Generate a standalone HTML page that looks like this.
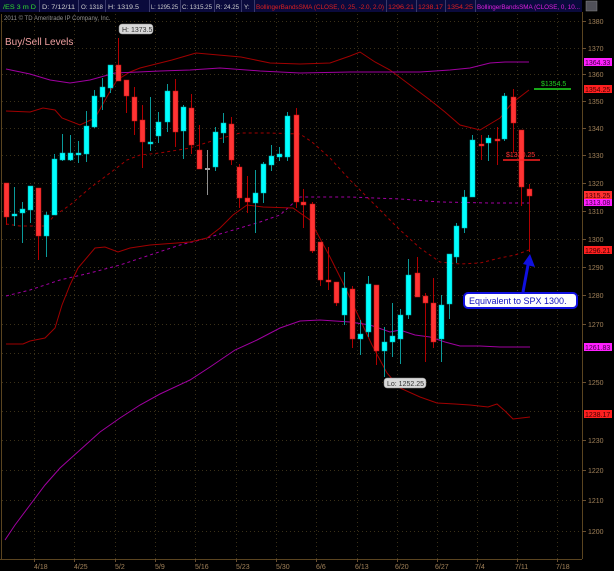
<!DOCTYPE html>
<html><head><meta charset="utf-8"><style>
html,body{margin:0;padding:0;background:#000;width:614px;height:571px;overflow:hidden}
svg{display:block}
text{font-family:"Liberation Sans",sans-serif}
</style></head><body>
<svg width="614" height="571" viewBox="0 0 614 571" xmlns="http://www.w3.org/2000/svg">
<rect width="614" height="571" fill="#000"/>
<!-- header -->
<rect x="0" y="0" width="582" height="12" fill="#0a0a3c"/>
<g stroke="#3a3a6a" stroke-width="1">
<line x1="39.5" y1="0" x2="39.5" y2="12"/><line x1="78.5" y1="0" x2="78.5" y2="12"/><line x1="105.5" y1="0" x2="105.5" y2="12"/><line x1="149.5" y1="0" x2="149.5" y2="12"/><line x1="180.5" y1="0" x2="180.5" y2="12"/><line x1="214.5" y1="0" x2="214.5" y2="12"/><line x1="241.5" y1="0" x2="241.5" y2="12"/><line x1="254.5" y1="0" x2="254.5" y2="12"/><line x1="386.5" y1="0" x2="386.5" y2="12"/><line x1="416.5" y1="0" x2="416.5" y2="12"/><line x1="445.5" y1="0" x2="445.5" y2="12"/><line x1="475.5" y1="0" x2="475.5" y2="12"/>
</g>
<g font-size="6.3" fill="#d0d0d0" lengthAdjust="spacingAndGlyphs">
<text x="3" y="9" fill="#30e030" textLength="33" lengthAdjust="spacingAndGlyphs">/ES 3 m D</text>
<text x="42" y="9" textLength="33" lengthAdjust="spacingAndGlyphs">D: 7/12/11</text>
<text x="81" y="9" textLength="22" lengthAdjust="spacingAndGlyphs">O: 1318</text>
<text x="108" y="9" textLength="31" lengthAdjust="spacingAndGlyphs">H: 1319.5</text>
<text x="151" y="9" textLength="27" lengthAdjust="spacingAndGlyphs">L: 1295.25</text>
<text x="182" y="9" textLength="30" lengthAdjust="spacingAndGlyphs">C: 1315.25</text>
<text x="216" y="9" textLength="23" lengthAdjust="spacingAndGlyphs">R: 24.25</text>
<text x="244" y="9">Y:</text>
<text x="256" y="9" fill="#e02020" textLength="128" lengthAdjust="spacingAndGlyphs">BollingerBandsSMA (CLOSE, 0, 25, -2.0, 2.0)</text>
<text x="388" y="9" fill="#e02020" textLength="26" lengthAdjust="spacingAndGlyphs">1296.21</text>
<text x="418" y="9" fill="#e02020" textLength="25" lengthAdjust="spacingAndGlyphs">1238.17</text>
<text x="447" y="9" fill="#e02020" textLength="26" lengthAdjust="spacingAndGlyphs">1354.25</text>
<text x="477" y="9" fill="#e020e0" textLength="103" lengthAdjust="spacingAndGlyphs">BollingerBandsSMA (CLOSE, 0, 10...</text>
</g>
<rect x="586" y="1" width="11" height="10" fill="#505058" stroke="#888" stroke-width="0.5"/>
<text x="4" y="20" font-size="6" fill="#909090">2011 © TD Ameritrade IP Company, Inc.</text>
<text x="5" y="45" font-size="10" fill="#f0a0a0">Buy/Sell Levels</text>
<!-- frame -->
<g stroke="#5a4420" stroke-width="1" fill="none">
<line x1="582.5" y1="12" x2="582.5" y2="559"/>
<line x1="0" y1="559.5" x2="582" y2="559.5"/>
<line x1="1.5" y1="14" x2="1.5" y2="559"/>
</g>
<!-- grid -->
<g stroke="#3a3018" stroke-width="1" stroke-dasharray="1,3">
<line x1="2" y1="21.5" x2="582" y2="21.5"/><line x1="2" y1="48.5" x2="582" y2="48.5"/><line x1="2" y1="74.5" x2="582" y2="74.5"/><line x1="2" y1="101.5" x2="582" y2="101.5"/><line x1="2" y1="128.5" x2="582" y2="128.5"/><line x1="2" y1="155.5" x2="582" y2="155.5"/><line x1="2" y1="183.5" x2="582" y2="183.5"/><line x1="2" y1="211.5" x2="582" y2="211.5"/><line x1="2" y1="239.5" x2="582" y2="239.5"/><line x1="2" y1="267.5" x2="582" y2="267.5"/><line x1="2" y1="295.5" x2="582" y2="295.5"/><line x1="2" y1="324.5" x2="582" y2="324.5"/><line x1="2" y1="353.5" x2="582" y2="353.5"/><line x1="2" y1="382.5" x2="582" y2="382.5"/><line x1="2" y1="411.5" x2="582" y2="411.5"/><line x1="2" y1="440.5" x2="582" y2="440.5"/><line x1="2" y1="470.5" x2="582" y2="470.5"/><line x1="2" y1="500.5" x2="582" y2="500.5"/><line x1="2" y1="531.5" x2="582" y2="531.5"/>
<line x1="34.5" y1="14" x2="34.5" y2="559"/><line x1="74.5" y1="14" x2="74.5" y2="559"/><line x1="115.5" y1="14" x2="115.5" y2="559"/><line x1="155.5" y1="14" x2="155.5" y2="559"/><line x1="195.5" y1="14" x2="195.5" y2="559"/><line x1="236.5" y1="14" x2="236.5" y2="559"/><line x1="276.5" y1="14" x2="276.5" y2="559"/><line x1="316.5" y1="14" x2="316.5" y2="559"/><line x1="357.5" y1="14" x2="357.5" y2="559"/><line x1="397.5" y1="14" x2="397.5" y2="559"/><line x1="437.5" y1="14" x2="437.5" y2="559"/><line x1="477.5" y1="14" x2="477.5" y2="559"/><line x1="517.5" y1="14" x2="517.5" y2="559"/><line x1="557.5" y1="14" x2="557.5" y2="559"/>
</g>
<!-- axis ticks + labels -->
<g stroke="#6a5030"><line x1="582" y1="21.5" x2="586" y2="21.5"/><line x1="582" y1="48.5" x2="586" y2="48.5"/><line x1="582" y1="74.5" x2="586" y2="74.5"/><line x1="582" y1="101.5" x2="586" y2="101.5"/><line x1="582" y1="128.5" x2="586" y2="128.5"/><line x1="582" y1="155.5" x2="586" y2="155.5"/><line x1="582" y1="183.5" x2="586" y2="183.5"/><line x1="582" y1="211.5" x2="586" y2="211.5"/><line x1="582" y1="239.5" x2="586" y2="239.5"/><line x1="582" y1="267.5" x2="586" y2="267.5"/><line x1="582" y1="295.5" x2="586" y2="295.5"/><line x1="582" y1="324.5" x2="586" y2="324.5"/><line x1="582" y1="382.5" x2="586" y2="382.5"/><line x1="582" y1="440.5" x2="586" y2="440.5"/><line x1="582" y1="470.5" x2="586" y2="470.5"/><line x1="582" y1="500.5" x2="586" y2="500.5"/><line x1="582" y1="531.5" x2="586" y2="531.5"/></g>
<g font-size="7" fill="#a08058">
<text x="588" y="24">1380</text><text x="588" y="51">1370</text><text x="588" y="77">1360</text><text x="588" y="104">1350</text><text x="588" y="131">1340</text><text x="588" y="158">1330</text><text x="588" y="186">1320</text><text x="588" y="214">1310</text><text x="588" y="242">1300</text><text x="588" y="270">1290</text><text x="588" y="298">1280</text><text x="588" y="327">1270</text><text x="588" y="385">1250</text><text x="588" y="443">1230</text><text x="588" y="473">1220</text><text x="588" y="503">1210</text><text x="588" y="534">1200</text>
</g>
<g font-size="7" fill="#a08058">
<text x="34" y="569">4/18</text><text x="74" y="569">4/25</text><text x="115" y="569">5/2</text><text x="155" y="569">5/9</text><text x="195" y="569">5/16</text><text x="236" y="569">5/23</text><text x="276" y="569">5/30</text><text x="316" y="569">6/6</text><text x="355" y="569">6/13</text><text x="395" y="569">6/20</text><text x="435" y="569">6/27</text><text x="475" y="569">7/4</text><text x="515" y="569">7/11</text><text x="556" y="569">7/18</text>
</g>
<g stroke="#6a5030"><line x1="34.5" y1="559" x2="34.5" y2="562"/><line x1="74.5" y1="559" x2="74.5" y2="562"/><line x1="115.5" y1="559" x2="115.5" y2="562"/><line x1="155.5" y1="559" x2="155.5" y2="562"/><line x1="195.5" y1="559" x2="195.5" y2="562"/><line x1="236.5" y1="559" x2="236.5" y2="562"/><line x1="276.5" y1="559" x2="276.5" y2="562"/><line x1="316.5" y1="559" x2="316.5" y2="562"/><line x1="357.5" y1="559" x2="357.5" y2="562"/><line x1="397.5" y1="559" x2="397.5" y2="562"/><line x1="437.5" y1="559" x2="437.5" y2="562"/><line x1="477.5" y1="559" x2="477.5" y2="562"/><line x1="517.5" y1="559" x2="517.5" y2="562"/><line x1="557.5" y1="559" x2="557.5" y2="562"/></g>

<!-- bands -->
<g fill="none" stroke-width="1">
<polyline stroke="#a00000" points="6,111 30,112 43,108 55,110 62,118 80,125 95,118 108,95 117,80 130,72 140,68 160,63 172,60 196,53 241,57 270,63 300,64 330,63 350,56 360,52 375,62 390,70 410,85 430,100 445,112 460,125 480,130 490,124 500,118 512,103 529,90"/>
<polyline stroke="#a000a0" points="6,69 30,74 50,80 70,83 90,80 115,73 160,71 190,70 220,68 260,71 300,73 350,72 420,72 450,70 470,68 490,63 505,62 529,62"/>
<polyline stroke="#a00000" stroke-dasharray="3,3" points="6,224 20,226 45,226 54,216 70,205 90,188 110,173 127,160 140,155 160,153 190,148 215,140 240,133 270,133 300,134 312,142 330,158 350,180 375,205 400,230 420,248 440,262 460,264 480,263 500,258 515,255 529,250"/>
<polyline stroke="#a000a0" stroke-dasharray="3,3" points="6,296 30,290 60,280 90,273 120,265 150,255 180,245 200,240 230,231 260,222 280,215 300,197 330,197 350,197 400,199 440,202 490,203 529,203"/>
<polyline stroke="#a00000" points="6,344 23,344 30,341 45,338 55,328 62,305 70,285 78,268 95,248 105,247 118,252 130,248 150,245 190,242 207,238 220,228 233,215 247,205 263,207 293,208 310,220 330,257 345,287 357,313 372,345 387,373 400,388 420,397 437,403 455,404 470,405 488,407 497,404 505,411 513,419 530,417"/>
<polyline stroke="#a000a0" points="5,540 15,525 30,505 45,485 60,468 80,450 100,432 120,418 140,405 160,394 190,380 210,367 235,350 257,340 280,328 300,321 320,320 350,322 370,325 390,332 400,330 415,335 430,337 445,342 460,346 480,346 500,347 530,347"/>
</g>

<!-- candles -->
<g id="c">
<g stroke="#b00000" stroke-width="1">
<line x1="6.5" y1="183" x2="6.5" y2="225"/><line x1="38.5" y1="188" x2="38.5" y2="260"/><line x1="118.5" y1="38" x2="118.5" y2="81"/><line x1="126.5" y1="80" x2="126.5" y2="113"/><line x1="134.5" y1="87" x2="134.5" y2="135"/><line x1="142.5" y1="105" x2="142.5" y2="168"/><line x1="175.5" y1="79" x2="175.5" y2="147"/><line x1="191.5" y1="94" x2="191.5" y2="154"/><line x1="199.5" y1="125" x2="199.5" y2="169"/><line x1="231.5" y1="117" x2="231.5" y2="165"/><line x1="239.5" y1="164" x2="239.5" y2="208"/><line x1="247.5" y1="176" x2="247.5" y2="213"/><line x1="296.5" y1="108" x2="296.5" y2="208"/><line x1="303.5" y1="189" x2="303.5" y2="228"/><line x1="312.5" y1="202" x2="312.5" y2="253"/><line x1="320.5" y1="242" x2="320.5" y2="286"/><line x1="328.5" y1="247" x2="328.5" y2="290"/><line x1="336.5" y1="282" x2="336.5" y2="306"/><line x1="352.5" y1="286" x2="352.5" y2="348"/><line x1="376.5" y1="285" x2="376.5" y2="365"/><line x1="417.5" y1="257" x2="417.5" y2="297"/><line x1="425.5" y1="293" x2="425.5" y2="362"/><line x1="433.5" y1="278" x2="433.5" y2="348"/><line x1="481.5" y1="135" x2="481.5" y2="160"/><line x1="497.5" y1="127" x2="497.5" y2="165"/><line x1="513.5" y1="89" x2="513.5" y2="153"/><line x1="521.5" y1="130" x2="521.5" y2="206"/><line x1="529.5" y1="184" x2="529.5" y2="252"/>
</g>
<g fill="#ff3434" stroke="#c01010" stroke-width="0.5">
<rect x="4" y="183" width="5" height="34"/><rect x="36" y="188" width="5" height="48"/><rect x="116" y="65" width="5" height="16"/><rect x="124" y="80" width="5" height="16"/><rect x="132" y="97" width="5" height="24"/><rect x="140" y="120" width="5" height="22"/><rect x="173" y="91" width="5" height="41"/><rect x="189" y="108" width="5" height="37"/><rect x="197" y="150" width="5" height="19"/><rect x="229" y="124" width="5" height="36"/><rect x="237" y="167" width="5" height="31"/><rect x="245" y="198" width="5" height="4"/><rect x="294" y="115" width="5" height="87"/><rect x="301" y="202" width="5" height="3"/><rect x="310" y="204" width="5" height="47"/><rect x="318" y="242" width="5" height="38"/><rect x="326" y="280" width="5" height="2"/><rect x="334" y="282" width="5" height="21"/><rect x="350" y="289" width="5" height="50"/><rect x="374" y="285" width="5" height="66"/><rect x="415" y="273" width="5" height="24"/><rect x="423" y="296" width="5" height="7"/><rect x="431" y="303" width="5" height="39"/><rect x="479" y="144" width="5" height="2"/><rect x="495" y="139" width="5" height="2"/><rect x="511" y="97" width="5" height="26"/><rect x="519" y="130" width="5" height="57"/><rect x="527" y="189" width="5" height="7"/>
</g>
<g stroke="#0a9a9a" stroke-width="1">
<line x1="14.5" y1="187" x2="14.5" y2="226"/><line x1="22.5" y1="202" x2="22.5" y2="243"/><line x1="30.5" y1="186" x2="30.5" y2="223"/><line x1="46.5" y1="212" x2="46.5" y2="257"/><line x1="54.5" y1="154" x2="54.5" y2="215"/><line x1="62.5" y1="134" x2="62.5" y2="161"/><line x1="70.5" y1="135" x2="70.5" y2="161"/><line x1="78.5" y1="141" x2="78.5" y2="163"/><line x1="86.5" y1="111" x2="86.5" y2="162"/><line x1="94.5" y1="90" x2="94.5" y2="128"/><line x1="102.5" y1="78" x2="102.5" y2="110"/><line x1="110.5" y1="65" x2="110.5" y2="93"/><line x1="150.5" y1="97" x2="150.5" y2="151"/><line x1="158.5" y1="112" x2="158.5" y2="143"/><line x1="167.5" y1="84" x2="167.5" y2="132"/><line x1="183.5" y1="105" x2="183.5" y2="159"/><line x1="215.5" y1="127" x2="215.5" y2="171"/><line x1="223.5" y1="113" x2="223.5" y2="143"/><line x1="255.5" y1="170" x2="255.5" y2="233"/><line x1="263.5" y1="162" x2="263.5" y2="203"/><line x1="271.5" y1="145" x2="271.5" y2="171"/><line x1="279.5" y1="147" x2="279.5" y2="161"/><line x1="287.5" y1="112" x2="287.5" y2="161"/><line x1="344.5" y1="272" x2="344.5" y2="325"/><line x1="360.5" y1="320" x2="360.5" y2="355"/><line x1="368.5" y1="276" x2="368.5" y2="337"/><line x1="384.5" y1="327" x2="384.5" y2="377"/><line x1="392.5" y1="303" x2="392.5" y2="357"/><line x1="400.5" y1="309" x2="400.5" y2="364"/><line x1="408.5" y1="259" x2="408.5" y2="319"/><line x1="441.5" y1="295" x2="441.5" y2="362"/><line x1="449.5" y1="254" x2="449.5" y2="319"/><line x1="456.5" y1="223" x2="456.5" y2="263"/><line x1="464.5" y1="190" x2="464.5" y2="233"/><line x1="472.5" y1="135" x2="472.5" y2="197"/><line x1="488.5" y1="135" x2="488.5" y2="161"/><line x1="504.5" y1="93" x2="504.5" y2="141"/>
</g>
<g fill="#00ffff" stroke="#00b0b0" stroke-width="0.5">
<rect x="12" y="214" width="5" height="2"/><rect x="20" y="209" width="5" height="4"/><rect x="28" y="186" width="5" height="24"/><rect x="44" y="215" width="5" height="21"/><rect x="52" y="159" width="5" height="56"/><rect x="60" y="153" width="5" height="7"/><rect x="68" y="153" width="5" height="7"/><rect x="76" y="153" width="5" height="2"/><rect x="84" y="126" width="5" height="28"/><rect x="92" y="96" width="5" height="31"/><rect x="100" y="87" width="5" height="10"/><rect x="108" y="65" width="5" height="23"/><rect x="148" y="142" width="5" height="2"/><rect x="156" y="122" width="5" height="14"/><rect x="165" y="91" width="5" height="31"/><rect x="181" y="107" width="5" height="24"/><rect x="213" y="132" width="5" height="35"/><rect x="221" y="123" width="5" height="10"/><rect x="253" y="193" width="5" height="10"/><rect x="261" y="164" width="5" height="29"/><rect x="269" y="156" width="5" height="9"/><rect x="277" y="154" width="5" height="3"/><rect x="285" y="116" width="5" height="41"/><rect x="342" y="288" width="5" height="27"/><rect x="358" y="334" width="5" height="5"/><rect x="366" y="284" width="5" height="48"/><rect x="382" y="342" width="5" height="9"/><rect x="390" y="336" width="5" height="6"/><rect x="398" y="315" width="5" height="24"/><rect x="406" y="275" width="5" height="40"/><rect x="439" y="305" width="5" height="34"/><rect x="447" y="254" width="5" height="50"/><rect x="454" y="226" width="5" height="31"/><rect x="462" y="197" width="5" height="31"/><rect x="470" y="140" width="5" height="57"/><rect x="486" y="138" width="5" height="5"/><rect x="502" y="96" width="5" height="43"/>
</g>
<line x1="207.5" y1="150" x2="207.5" y2="195" stroke="#909090"/>
<rect x="205" y="168" width="5" height="2" fill="#a0a0a0"/>
</g>

<!-- high / low markers -->
<rect x="119" y="24" width="34" height="10" rx="3" fill="#d8d8d8" stroke="#888" stroke-width="0.5"/>
<text x="122" y="32" font-size="7" fill="#333">H: 1373.5</text>
<rect x="384" y="378" width="42" height="10" rx="3" fill="#d8d8d8" stroke="#888" stroke-width="0.5"/>
<text x="387" y="386" font-size="7" fill="#333">Lo: 1252.25</text>

<!-- levels -->
<line x1="534" y1="89" x2="571" y2="89" stroke="#20e020" stroke-width="1.5"/>
<text x="541" y="86" font-size="7" fill="#20d020">$1354.5</text>
<line x1="503" y1="160" x2="540" y2="160" stroke="#ff2020" stroke-width="1.5"/>
<text x="506" y="157" font-size="7" fill="#ff3030">$1330.25</text>

<!-- callout -->
<path d="M523 292 L528 265" stroke="#1010e0" stroke-width="3" fill="none"/>
<path d="M523 264 L530 254 L535 267 Z" fill="#1010e0"/>
<rect x="464" y="293" width="113" height="15" rx="4" fill="#fff" stroke="#1010e0" stroke-width="2"/>
<text x="469" y="304" font-size="9" fill="#1010c0">Equivalent to SPX 1300.</text>

<!-- price tags -->
<g font-size="7">
<rect x="584" y="58" width="28" height="8" fill="#ff20ff"/><text x="585" y="65" fill="#400040">1364.33</text>
<rect x="584" y="85" width="28" height="8" fill="#ff2020"/><text x="585" y="92" fill="#400000">1354.25</text>
<rect x="584" y="191" width="28" height="8" fill="#ff3030"/><text x="585" y="198" fill="#400000">1315.25</text>
<rect x="584" y="199" width="28" height="7" fill="#ff20ff"/><text x="585" y="205" fill="#400040">1313.08</text>
<rect x="584" y="246" width="28" height="8" fill="#ff2020"/><text x="585" y="253" fill="#400000">1296.21</text>
<rect x="584" y="343" width="28" height="8" fill="#ff20ff"/><text x="585" y="350" fill="#400040">1261.83</text>
<rect x="584" y="410" width="28" height="8" fill="#ff2020"/><text x="585" y="417" fill="#400000">1238.17</text>
</g>
</svg>
</body></html>
